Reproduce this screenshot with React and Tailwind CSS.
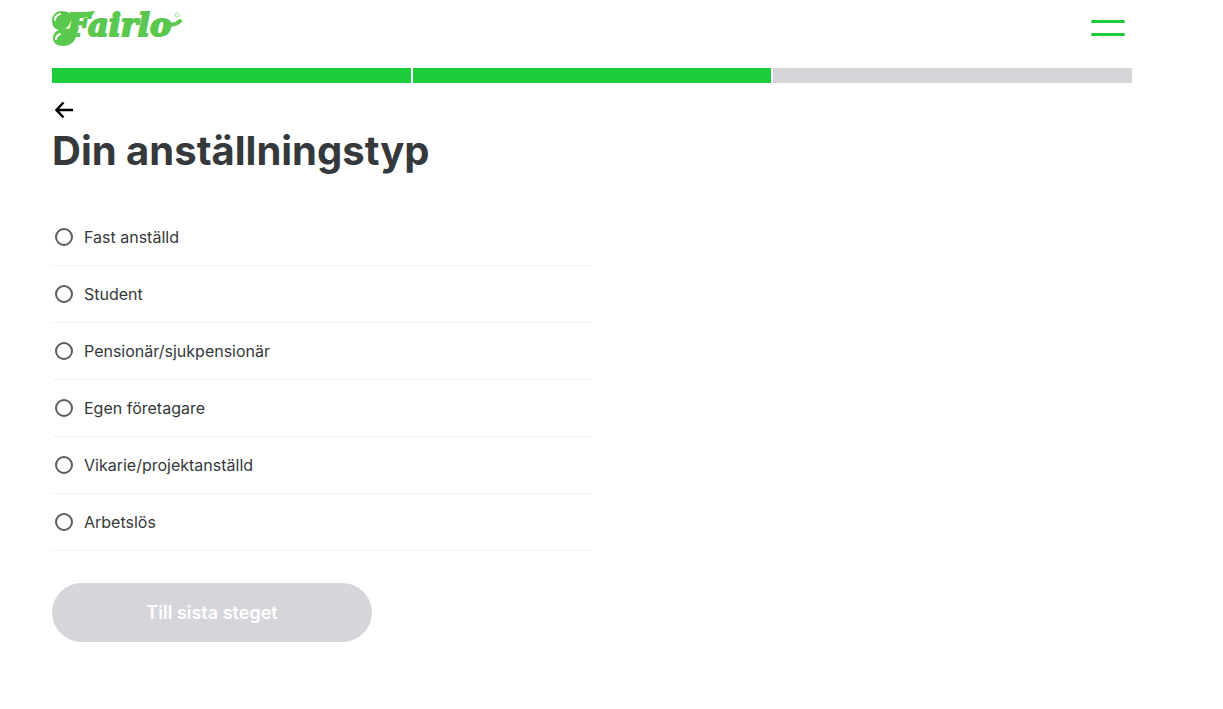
import { useState } from "react";

const options = [
  { id: "fast", label: "Fast anställd" },
  { id: "student", label: "Student" },
  { id: "pension", label: "Pensionär/sjukpensionär" },
  { id: "foretagare", label: "Egen företagare" },
  { id: "vikarie", label: "Vikarie/projektanställd" },
  { id: "arbetslos", label: "Arbetslös" },
];

function Logo() {
  return (
    <svg width="136" height="52" viewBox="0 -8 136 52" fill="#5ac84f" role="img" aria-label="Fairlo">
      {/* balloon ends of the F */}
      <path d="M0 13C0 7 4 3 10 3c5 0 8 3 13 3 7 0 12-3 20-3-3 6-8 7-15 7-6 0-9 1-10 5-2 5-6 7-10 7-5 0-8-4-8-9Z" />
      <path d="M1 30c0-6 5-9 12-9l14-2-3 10c-2 6-7 9-13 9-6 0-10-3-10-8Z" />
      <text
        x="15"
        y="28"
        fontFamily="'DejaVu Serif', serif"
        fontSize="32"
        fontWeight="700"
        fontStyle="italic"
        stroke="#5ac84f"
        strokeWidth="2"
        strokeLinejoin="round"
      >
        Fairlo
      </text>
      {/* tail after the o */}
      <path d="M113 14c5 4 11 3 15-1" fill="none" stroke="#5ac84f" strokeWidth="4" strokeLinecap="round" />
      <circle cx="125" cy="7" r="2" fill="none" stroke="#a9dfa4" strokeWidth="1" />
      <g fill="none" stroke="#fff" strokeLinecap="round" strokeWidth="2">
        <path d="M3 12c0-3 2-5 5-6" />
        <path d="M4 31c0-3 2-4 4-5" />
      </g>
    </svg>
  );
}

export default function App() {
  const [selected, setSelected] = useState("");

  return (
    <div className="min-h-screen bg-white pl-[52px] pr-[91px] font-['Inter',sans-serif] text-[#35393b]">
      <div className="max-w-[1080px]">
        <header className="flex h-[68px] items-start justify-between">
          <a href="#">
            <Logo />
          </a>
          <button type="button" aria-label="Meny" className="mt-5 mr-[7px] flex w-[34px] flex-col gap-[10px]">
            <span className="h-[3px] w-full rounded-full bg-[#1ecb3d]"></span>
            <span className="h-[3px] w-full rounded-full bg-[#1ecb3d]"></span>
          </button>
        </header>

        <div className="grid h-[15px] grid-cols-3 gap-[2px]">
          <div className="bg-[#1ecb3d]"></div>
          <div className="bg-[#1ecb3d]"></div>
          <div className="bg-[#d6d5da]"></div>
        </div>

        <main>
          <button type="button" aria-label="Tillbaka" className="mt-[15px] block text-black">
            <svg width="24" height="24" viewBox="0 0 24 24" fill="none" stroke="currentColor" strokeWidth="2.5">
              <path d="M11.5 4.5 4.5 12l7 7.5M4.5 12H21" />
            </svg>
          </button>
          <h1 className="text-[40px] leading-[58px] font-bold">Din anställningstyp</h1>

          <form className="mt-[29px]" onSubmit={(e) => e.preventDefault()}>
            <div className="w-1/2">
              {options.map((option) => (
                <label
                  key={option.id}
                  htmlFor={option.id}
                  className="flex h-[57px] cursor-pointer items-center border-b border-[#f3f3f4] pl-[3px] text-base"
                >
                  <input
                    id={option.id}
                    type="radio"
                    name="employment"
                    value={option.id}
                    checked={selected === option.id}
                    onChange={(e) => setSelected(e.target.value)}
                    className="mr-[11px] size-[18px] appearance-none rounded-full border-2 border-[#5c5c5e] checked:border-[5px] checked:border-[#1ecb3d]"
                  />
                  {option.label}
                </label>
              ))}
            </div>
            <button
              type="submit"
              disabled={!selected}
              className="mt-8 h-[59px] w-80 rounded-full bg-[#1ecb3d] text-lg font-semibold text-white disabled:bg-[#d6d5da]"
            >
              Till sista steget
            </button>
          </form>
        </main>
      </div>
    </div>
  );
}
